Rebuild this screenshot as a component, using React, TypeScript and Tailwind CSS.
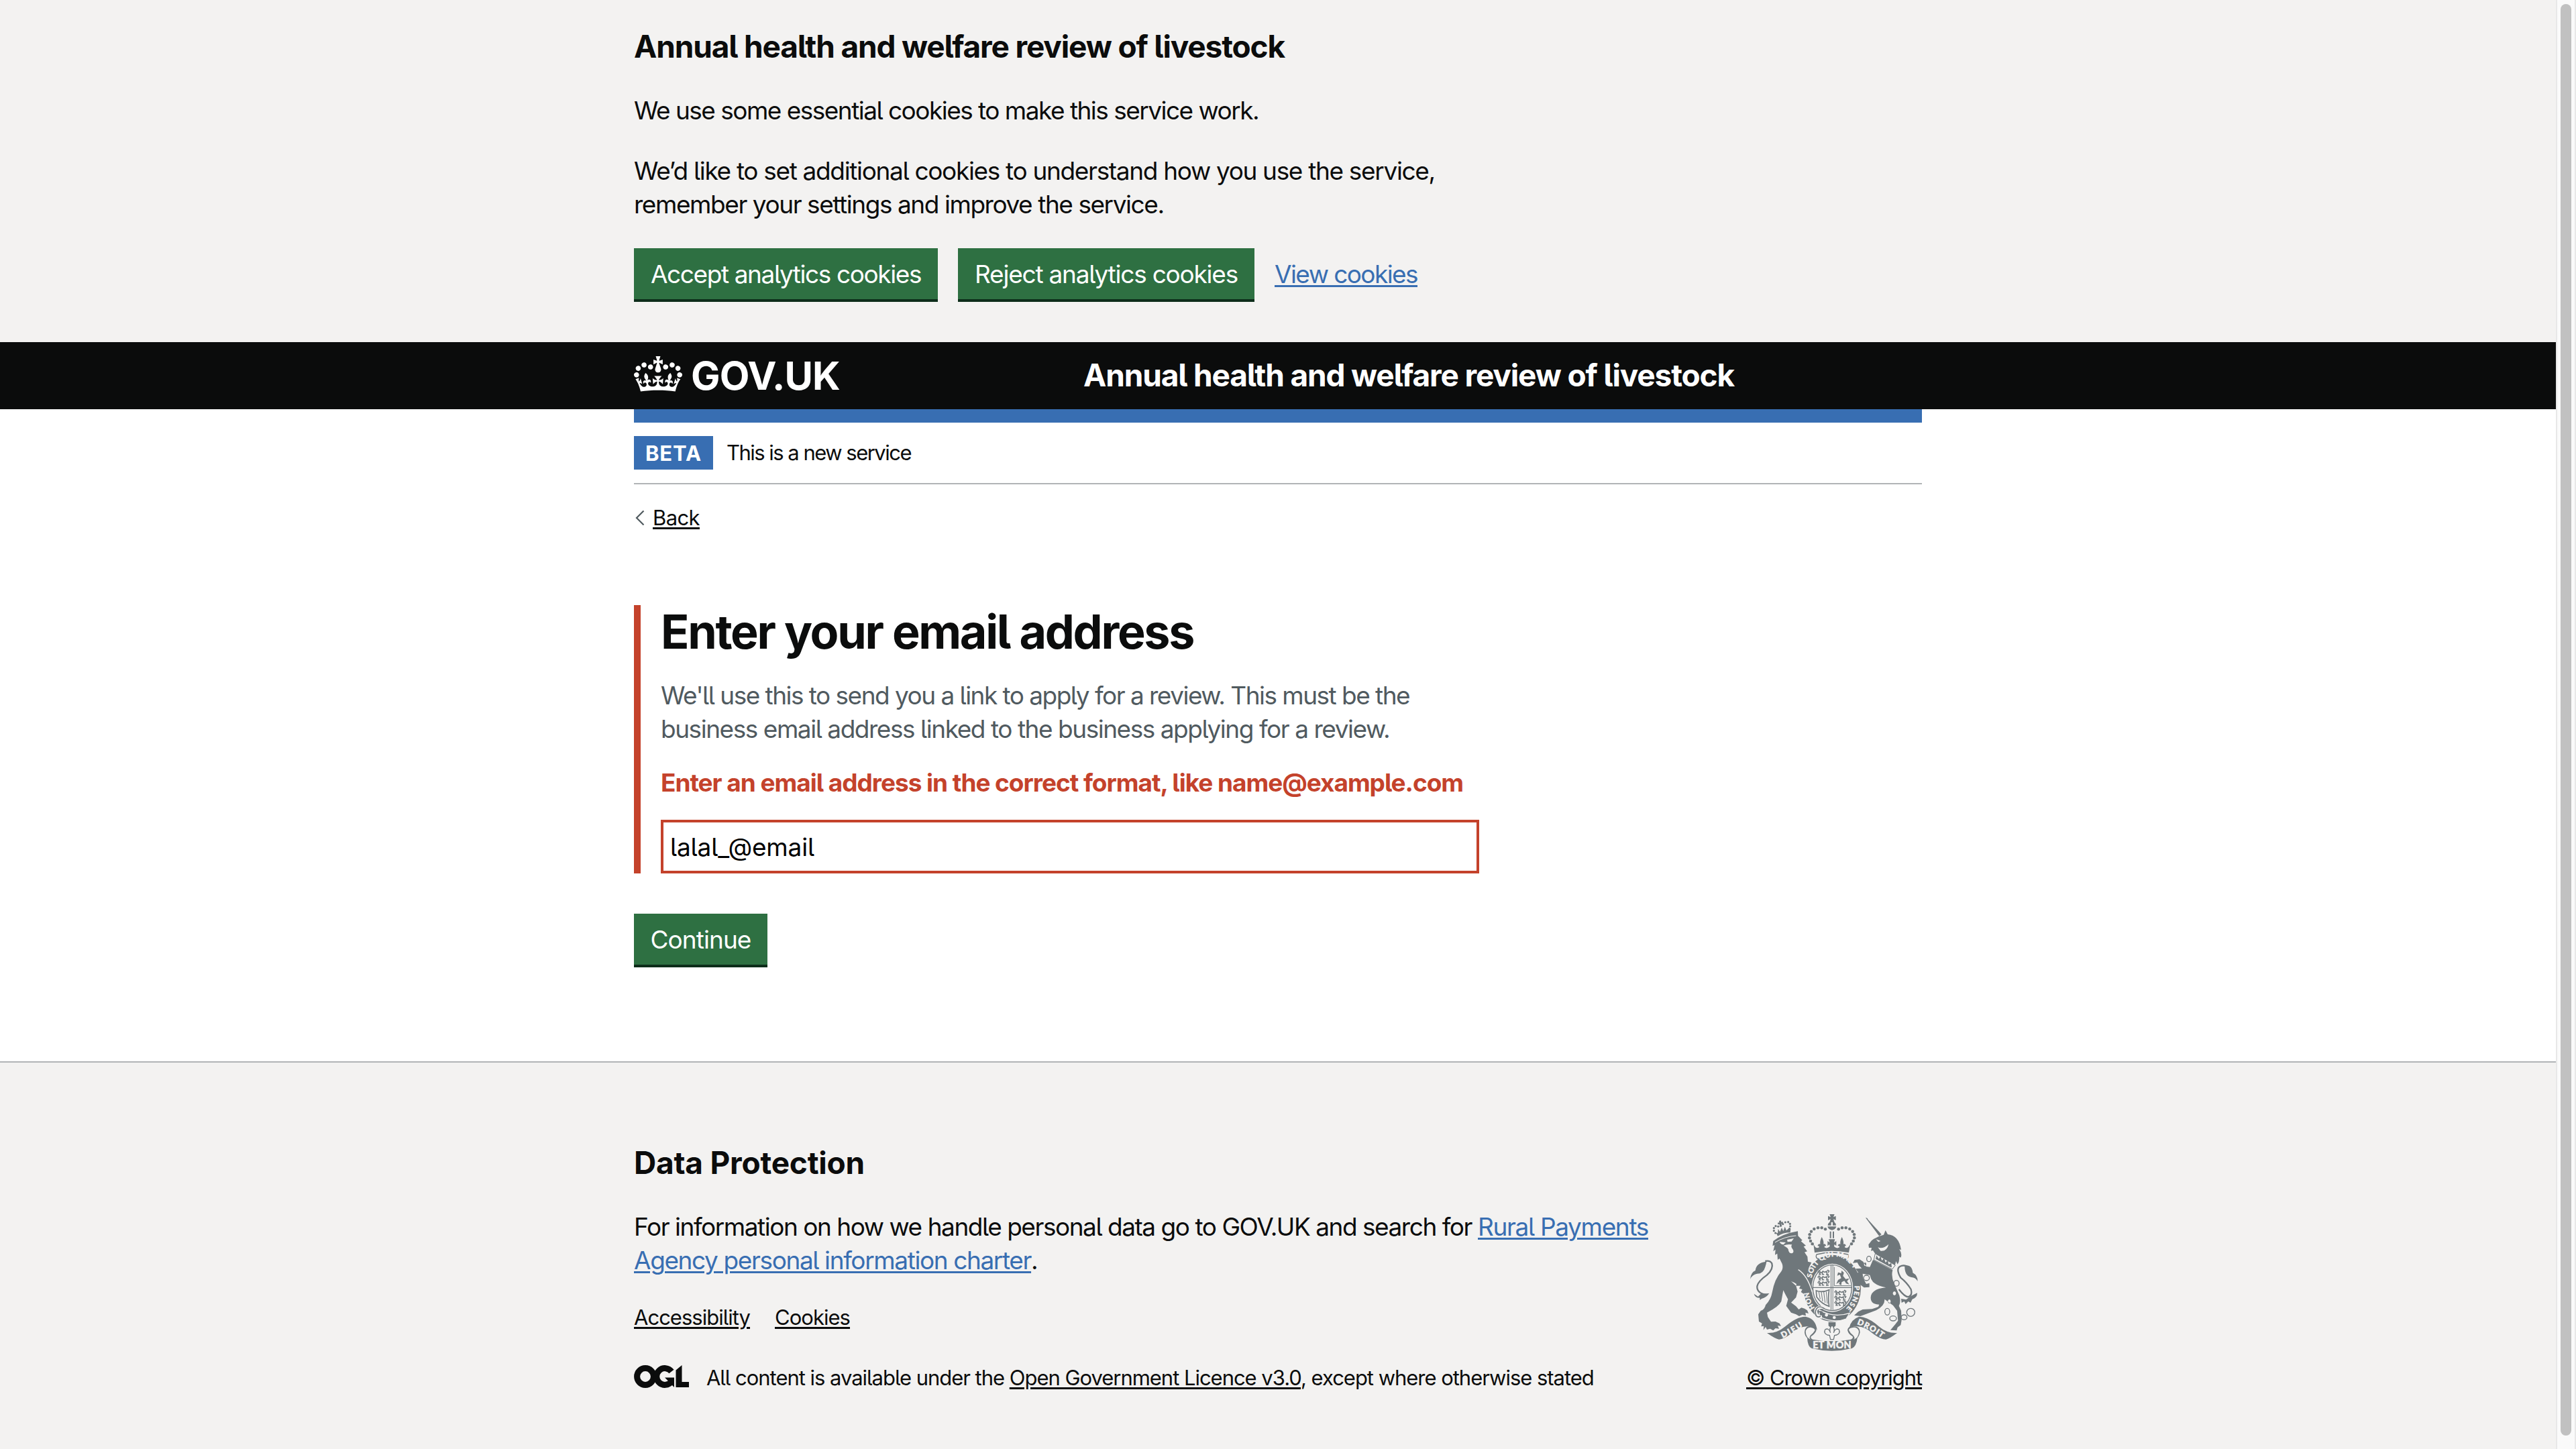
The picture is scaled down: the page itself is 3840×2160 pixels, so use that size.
import type { ReactNode } from "react";

const BODY = "text-[37px] leading-[50px]";
const SMALL = "text-[31px] leading-[40px]";
const UNDERLINE = "underline decoration-[3px] underline-offset-[3px]";

function CrownIcon() {
  return (
    <svg viewBox="0 0 132 97" className="h-[53px] w-[72px]" fill="currentColor" aria-hidden="true">
      <path d="M25 30.2c3.5 1.5 7.7-.2 9.1-3.7 1.5-3.6-.2-7.8-3.9-9.2-3.6-1.4-7.6.3-9.1 3.9-1.4 3.5.3 7.5 3.9 9zM9 39.5c3.6 1.5 7.8-.2 9.2-3.7 1.5-3.6-.2-7.8-3.9-9.1-3.6-1.5-7.6.2-9.1 3.8-1.4 3.5.3 7.5 3.8 9zM4.4 57.2c3.5 1.5 7.7-.2 9.1-3.8 1.5-3.6-.2-7.7-3.9-9.1-3.5-1.5-7.6.3-9.1 3.8-1.4 3.5.3 7.6 3.9 9.1zm38.3-21.4c3.5 1.5 7.7-.2 9.1-3.8 1.5-3.6-.2-7.7-3.9-9.1-3.6-1.5-7.6.3-9.1 3.8-1.3 3.6.4 7.7 3.9 9.1zm64.4-5.6c-3.6 1.5-7.8-.2-9.1-3.7-1.5-3.6.2-7.8 3.8-9.2 3.6-1.4 7.7.3 9.2 3.9 1.3 3.5-.4 7.5-3.9 9zm15.9 9.3c-3.6 1.5-7.7-.2-9.1-3.7-1.5-3.6.2-7.8 3.7-9.1 3.6-1.5 7.7.2 9.2 3.8 1.5 3.5-.3 7.5-3.8 9zm4.7 17.7c-3.6 1.5-7.8-.2-9.2-3.8-1.5-3.6.2-7.7 3.9-9.1 3.6-1.5 7.7.3 9.2 3.8 1.3 3.5-.4 7.6-3.9 9.1zM89.3 35.8c-3.6 1.5-7.8-.2-9.2-3.8-1.4-3.6.2-7.7 3.9-9.1 3.6-1.5 7.7.3 9.2 3.8 1.4 3.6-.3 7.7-3.9 9.1zM69.7 17.7l8.9 4.7V9.3l-8.9 2.8c-.2-.3-.5-.6-.9-.9L72.4 0H59.6l3.5 11.2c-.3.3-.6.5-.9.9l-8.8-2.8v13.1l8.8-4.7c.3.3.6.7.9.9l-5 15.4v.1c-.2.8-.4 1.6-.4 2.4 0 4.1 3.1 7.5 7 8.1h.2c.3 0 .7.1 1 .1.4 0 .7 0 1-.1h.2c4-.6 7.1-4.1 7.1-8.1 0-.8-.1-1.7-.4-2.4V34l-5.1-15.4c.4-.2.7-.6 1-.9zM66 92.8c16.9 0 32.8 1.1 47.1 3.2 4-16.9 8.9-26.7 14-33.5l-9.6-3.4c1 4.9 1.1 7.2 0 10.2-1.5-1.4-3-4.3-4.2-8.7L108.6 76c2.8-2 5-3.2 7.5-3.3-4.4 9.4-10 11.9-13.6 11.2-4.3-.8-6.3-4.6-5.6-7.9 1-4.7 5.7-5.9 8-.5 4.3-8.7-3-11.4-7.6-8.8 7.1-7.2 7.9-13.5 2.1-21.1-8 6.1-8.1 12.3-4.5 20.8-4.7-5.4-12.1-2.5-9.5 6.2 3.4-5.2 7.9-2 7.2 3.1-.6 4.3-6.4 7.8-13.5 7.2-10.3-.9-10.9-8-11.2-13.8 2.5-.5 7.1 1.8 11 7.3L80.2 60c-4.1 4.4-8 5.3-12.3 5.4 1.4-4.4 8-11.6 8-11.6H55.5s6.4 7.2 7.9 11.6c-4.2-.1-8-1-12.3-5.4l1.4 16.4c3.9-5.5 8.5-7.7 10.9-7.3-.3 5.8-.9 12.8-11.1 13.8-7.2.6-12.9-2.9-13.5-7.2-.7-5 3.8-8.3 7.1-3.1 2.7-8.7-4.6-11.6-9.4-6.2 3.7-8.5 3.6-14.7-4.6-20.8-5.8 7.6-5 13.9 2.2 21.1-4.7-2.6-11.9.1-7.7 8.8 2.3-5.5 7.1-4.2 8.1.5.7 3.3-1.3 7.1-5.7 7.9-3.5.7-9-1.8-13.5-11.2 2.5.1 4.7 1.3 7.5 3.3l-4.7-15.4c-1.2 4.4-2.7 7.2-4.3 8.7-1.1-3-.9-5.3 0-10.2l-9.5 3.4c5 6.9 9.9 16.7 14 33.5 14.8-2.1 30.8-3.2 47.7-3.2z" />
    </svg>
  );
}

const CREST = "#6f777b";
const PAPER = "#f3f2f1";

const CROWN_BEADS: [number, number][] = [
  [393, 127], [377, 121], [360, 121], [343, 126], [330, 137], [323, 151], [322, 166], [327, 180], [335, 193],
  [452, 127], [468, 121], [485, 121], [502, 126], [515, 137], [522, 151], [523, 166], [518, 180], [510, 193],
];

const LION_BEADS: [number, number][] = [
  [170, 144], [163, 134], [163, 122], [171, 113], [182, 115], [203, 104], [214, 96], [227, 95], [235, 103], [236, 114], [233, 125],
];

function MiniLions({ x, y }: { x: number; y: number }) {
  return (
    <g transform={`translate(${x} ${y})`} fill="none" stroke={CREST} strokeWidth="4.5" strokeLinecap="round">
      {[0, 24, 48].map((dy) => (
        <path
          key={dy}
          d={`M2 ${dy + 8}l5-6 5 5M6 ${dy + 12}h12l6-7 8 4 12-5M12 ${dy + 13}l-4 6 6 1M22 ${dy + 10}v9h6M36 ${dy + 7}l7 5-2 8 8-1M46 ${dy}l6 4-3 6`}
        />
      ))}
    </g>
  );
}

function RoyalArms() {
  return (
    <svg viewBox="57 60 750 612" className="h-[204px] w-[250px]" fill={CREST} aria-hidden="true">
      {/* central crown */}
      <path d="M412 60h22l-5 13 11-5v19l-11-5 5 14h-22l5-14-12 5V68l12 5z" />
      <path d="M404 110a18 17 0 0 1 15-16v16zm22-16a18 17 0 0 1 15 16h-15zM403 115h39q-3 15-19 16-17-1-20-16z" />
      <path d="M413 137h6v30h-6zM426 137h6v30h-6z" />
      {CROWN_BEADS.map(([x, y]) => (
        <circle key={`${x}-${y}`} cx={x} cy={y} r="6.8" />
      ))}
      <path d="M340 194L345 232Q422 216 498 232L505 194L496 207Q488 214 480 208Q478 200 486 202Q482 190 474 194Q476 180 467 162Q458 180 460 194Q452 190 448 202Q458 200 456 208Q444 216 432 204L434 195L442 202V180L432 187L436 172H408L413 187L403 180V202L411 195L413 204Q400 216 389 208Q387 200 397 202Q393 190 385 194Q387 180 377 162Q368 180 370 194Q362 190 358 202Q367 200 365 208Q356 214 348 207Z" />
      <path d="M354 240Q424 222 494 240Q500 252 488 260Q424 238 359 260Q348 252 354 240Z" fill={PAPER} stroke={CREST} strokeWidth="4" />

      {/* garter */}
      <ellipse cx="424" cy="391" rx="128" ry="149" />
      <ellipse cx="424" cy="389" rx="93" ry="108" fill={PAPER} />
      <ellipse cx="424" cy="389" rx="87" ry="102" fill="none" stroke={CREST} strokeWidth="4" />
      <path d="M338 386h172v4H338zM417 288h3v200h-3zM425 288h3v200h-3z" />
      <path d="M433 296v84h74" fill="none" stroke={CREST} strokeWidth="3" />
      <MiniLions x={358} y={310} />
      <MiniLions x={433} y={400} />
      <path d="M442 372L450 354L464 346L458 330L446 335L450 320L464 324L466 312L476 322L472 336L484 350L500 347L490 360L500 374L486 370L478 358L466 364L464 378L454 372L458 362Z" />
      <path d="M352 402Q378 412 410 398Q404 436 410 472Q376 462 354 430Z" fill="none" stroke={CREST} strokeWidth="5" />
      <path d="M364 408l6 32M375 408l6 42M386 408l6 48M397 406l5 54" stroke={CREST} strokeWidth="3" />
      <path id="garter-top" d="M331 350A101 116 0 0 1 534 384" fill="none" />
      <path id="garter-left" d="M362 497A112 131 0 0 1 319 380" fill="none" />
      <path id="garter-right" d="M524 380A103 121 0 0 1 474 492" fill="none" />
      <g fill={PAPER} stroke={PAPER} strokeWidth="1" fontFamily="Lato, sans-serif" fontWeight="900">
        <text fontSize="32">
          <textPath href="#garter-top" startOffset="4" textLength="262">SOIT QUI MAL Y</textPath>
        </text>
        <text fontSize="31">
          <textPath href="#garter-left" startOffset="24" textLength="76">HON</textPath>
        </text>
        <text fontSize="31">
          <textPath href="#garter-right" textLength="112">PENSE</textPath>
        </text>
      </g>
      <path d="M366 488Q430 526 502 502L486 528Q430 550 366 518Z" stroke={PAPER} strokeWidth="4" />
      <circle cx="398" cy="511" r="7" fill={PAPER} />
      <circle cx="433" cy="522" r="7" fill={PAPER} />
      <path d="M384 476Q348 474 350 496Q352 520 378 520" fill="none" stroke={PAPER} strokeWidth="14" />
      <path d="M388 482Q366 466 354 482Q344 498 352 514Q360 524 372 516M362 496H380" fill="none" stroke={CREST} strokeWidth="5" />

      {/* lion */}
      {LION_BEADS.map(([x, y]) => (
        <circle key={`${x}-${y}`} cx={x} cy={y} r="4.8" />
      ))}
      <path d="M186 90l8-2 2 7 8-1-1 8-7 1 3 12-9 2-2-12-7 1-1-8 7-1z" />
      <path d="M173 143L180 145L182 126L190 139L198 120L205 136L212 116L219 133L230 122L232 128L238 126L236 142Q206 142 180 158Z" />
      <path
        fillRule="evenodd"
        d="M160 180Q200 148 270 136L271 157L290 176L284 181L306 200L296 205L312 226L300 230L313 250L315 272L331 276L319 300L310 335L326 362L336 392L331 414L318 402L312 414L302 404L296 416L284 408L290 396L276 392L282 380L262 380L264 372L254 366L240 360L262 380L269 406L262 432L240 455L262 472L274 486L286 478L300 482L312 490L318 504L304 500L306 514L290 510L276 516L262 508L240 500L218 470L226 440L215 420L205 400L196 450Q184 474 132 500L136 520L150 541L170 540L188 548L195 560L180 558L186 572L170 570L160 580L146 572L132 576L126 564L116 578L118 560L106 562L110 548L96 540L93 508L104 492Q122 486 126 466Q150 440 155 410Q166 350 196 316Q206 300 200 282L188 258L180 264L178 236L168 242L170 218L160 226L166 198L157 202ZM188 184L216 186L206 196Q194 196 188 184ZM222 174L252 168L242 182L224 184ZM206 200Q224 192 244 196Q238 204 244 212Q256 226 246 234Q232 238 228 222Q230 212 206 200Z"
      />
      <path d="M168 186Q210 160 262 156" fill="none" stroke={PAPER} strokeWidth="3" />
      <path d="M272 308Q314 336 334 408" fill="none" stroke={PAPER} strokeWidth="4" />
      <path d="M126 420Q86 412 88 382Q92 360 132 332Q162 304 154 280Q146 266 124 270" fill="none" stroke={CREST} strokeWidth="7" />
      <path d="M57 350Q60 320 80 312Q84 276 130 272Q128 284 124 296Q116 326 88 326Q66 330 57 350ZM74 416L92 428L104 416L142 414Q130 432 108 438L100 444L100 434Q78 434 74 416Z" />

      {/* unicorn */}
      <path d="M573 76Q581 74 584 84L644 150L634 158Z" />
      <path
        fillRule="evenodd"
        d="M662 132L672 150Q722 154 732 220L724 216Q738 240 730 254L723 250Q726 270 716 284L709 270L704 290L622 240L614 234L606 222L597 224L600 210L588 210L586 196L600 178Q626 158 654 152ZM620 172L640 180L630 184ZM628 208Q650 218 676 194Q668 228 640 224Z"
      />
      <path d="M616 236L706 288L692 306L610 264Z" fill={PAPER} stroke={CREST} strokeWidth="3" />
      <path d="M618 260L622 244L632 260L640 248L646 268L656 256L662 276L672 266L676 284L688 278L690 298L684 296Z" />
      <path
        fillRule="evenodd"
        d="M606 264L694 310Q686 340 702 372L724 424Q732 450 722 470L732 492L734 534L730 556L716 566L712 580L684 578L706 552L718 536L714 492L696 468L658 440Q660 470 620 490L576 506L550 516L522 512L540 496L560 486L602 484L630 474L634 464Q594 462 596 432Q598 394 664 388Q610 378 598 350L592 332L560 326L562 346L576 372L590 368L590 386L566 388L550 376L534 350L528 330L540 320L528 304L556 302L544 290L536 276L516 278L524 264L546 262L562 272L576 294L592 296ZM571 276A5 8 0 1 0 571.100 276ZM702 405A7 9 0 1 0 702.100 405ZM679 441A6 9 0 1 0 679.100 441Z"
      />
      <g fill="none" stroke={CREST} strokeWidth="4">
        <ellipse cx="588" cy="260" rx="10" ry="12" />
        <ellipse cx="577" cy="345" rx="13" ry="12" />
        <ellipse cx="711" cy="369" rx="12" ry="13" />
        <ellipse cx="670" cy="496" rx="11" ry="15" />
        <ellipse cx="696" cy="526" rx="15" ry="11" />
        <ellipse cx="745" cy="521" rx="13" ry="11" />
        <circle cx="775" cy="499" r="18" />
      </g>
      <path d="M722 396Q748 430 764 430Q784 422 776 396Q758 366 730 344Q708 306 726 294Q740 286 756 292" fill="none" stroke={CREST} strokeWidth="7" />
      <path d="M748 288Q782 286 784 322Q806 334 806 360Q796 342 778 342Q746 336 748 288ZM804 412Q804 434 782 440L774 456L764 450L752 462L746 450L734 456L732 438L754 442L776 426Z" />

      {/* ribbons */}
      <path d="M132 591Q176 594 214 562Q264 518 304 518Q350 526 356 578Q340 562 318 562Q280 558 240 594Q206 620 186 620Q170 618 132 591Z" />
      <path d="M714 591Q670 594 632 562Q584 518 544 518Q508 530 500 568Q516 558 528 562Q566 558 606 594Q640 620 664 620Q678 618 714 591Z" />
      <path d="M300 588Q300 562 324 560Q356 564 352 582Q346 596 330 606Q324 614 336 620Q422 636 508 620Q520 614 514 606Q496 596 492 578Q496 558 522 562Q548 562 548 588Q544 606 536 614Q532 650 512 660Q422 682 332 660Q314 652 312 614Q302 606 300 588Z" />
      <path d="M305 586Q308 566 326 566Q348 570 346 580Q340 592 326 602Q318 614 328 621Q306 612 305 586ZM543 586Q540 566 522 566Q498 568 498 578Q504 592 518 602Q528 614 520 621Q542 612 543 586Z" fill={PAPER} />
      <path id="ribbon-left" d="M203 614Q248 592 306 554" fill="none" />
      <path id="ribbon-right" d="M534 552Q582 568 646 614" fill="none" />
      <g fill={PAPER} stroke={PAPER} strokeWidth="1.500" fontFamily="Lato, sans-serif" fontWeight="900">
        <text fontSize="36">
          <textPath href="#ribbon-left" textLength="104">DIEU</textPath>
        </text>
        <text fontSize="36">
          <textPath href="#ribbon-right" textLength="128">DROIT</textPath>
        </text>
        <text x="337" y="661" fontSize="43" textLength="172">ET MON</text>
      </g>
      <path d="M407 543h32v16q-8 6-16 16-8-10-16-16z" />
      <path d="M423 556Q438 572 430 590Q438 566 454 576Q462 592 444 600L434 602L430 620H416L412 602L402 600Q384 592 392 576Q408 566 416 590Q408 572 423 556Z" fill={PAPER} stroke={CREST} strokeWidth="4" />
    </svg>
  );
}

function OglIcon() {
  return (
    <svg viewBox="0 0 82 34" className="h-[34px] w-[82px]" aria-hidden="true">
      <g fill="none" stroke="#0b0c0c" strokeWidth="9">
        <circle cx="17" cy="17" r="12.4" />
        <path d="M56 9.5A12.4 12.4 0 1 0 56 24.5" />
      </g>
      <path d="M46 18.500h14V33l-4-4-7-2.500 2-3zM62.500 7.500L71.500 0V25H82v8H62.500z" fill="#0b0c0c" />
    </svg>
  );
}

function Button({ children, className = "" }: { children: ReactNode; className?: string }) {
  return (
    <button
      className={`h-20 border-b-4 border-[#0d2d1a] bg-[#2e7042] pt-px text-center whitespace-nowrap text-white ${BODY} ${className}`}
    >
      {children}
    </button>
  );
}

function Link({ children, className = "" }: { children: ReactNode; className?: string }) {
  return (
    <a href="#" className={`${UNDERLINE} ${className}`}>
      {children}
    </a>
  );
}

function Container({ children, className = "" }: { children: ReactNode; className?: string }) {
  return <div className={`mx-auto w-[1920px] whitespace-nowrap ${className}`}>{children}</div>;
}

function CookieBanner() {
  return (
    <section className="h-[510px] bg-[#f3f2f1] pt-[39px]">
      <Container>
        <h2 className="text-[46px] leading-[60px] font-bold tracking-[-0.025em]">
          Annual health and welfare review of livestock
        </h2>
        <div className={`mt-[41px] ${BODY}`}>
          <p className="tracking-[-0.0412em]">We use some essential cookies to make this service work.</p>
          <p className="mt-10 tracking-[-0.036em]">
            We’d like to set additional cookies to understand how you use the service,
          </p>
          <p className="tracking-[-0.039em]">remember your settings and improve the service.</p>
        </div>
        <div className="mt-10 flex items-start">
          <Button className="w-[453px] tracking-[-0.038em]">Accept analytics cookies</Button>
          <Button className="ml-[30px] w-[442px] tracking-[-0.033em]">Reject analytics cookies</Button>
          <Link className={`mt-[14px] ml-[30px] tracking-[-0.0427em] text-[#386eb2] ${BODY}`}>View cookies</Link>
        </div>
      </Container>
    </section>
  );
}

function Header() {
  return (
    <header className="h-[100px] bg-[#0b0c0c] text-white">
      <Container className="flex h-full items-center">
        <div className="flex w-[670px] items-center">
          <span className="-mt-[5px]">
            <CrownIcon />
          </span>
          <span className="ml-[13px] text-[58px] leading-[60px] font-bold tracking-[-0.0149em]">GOV.UK</span>
        </div>
        <span className="-mt-[2px] text-[46px] leading-[60px] font-bold tracking-[-0.025em]">
          Annual health and welfare review of livestock
        </span>
      </Container>
    </header>
  );
}

function EmailForm() {
  return (
    <main>
      <div className="border-l-[10px] border-[#c4422b] pl-[30px]">
        <h1 className="text-[70px] leading-[80px] font-bold tracking-[-0.033em]">Enter your email address</h1>
        <div className={`mt-[30px] text-[#505a5f] ${BODY}`}>
          <p className="tracking-[-0.0413em]">
            We'll use this to send you a link to apply for a review. This must be the
          </p>
          <p className="tracking-[-0.0395em]">
            business email address linked to the business applying for a review.
          </p>
        </div>
        <p className={`mt-[30px] font-bold tracking-[-0.028em] text-[#c4422b] ${BODY}`}>
          Enter an email address in the correct format, like name@example.com
        </p>
        <input
          type="email"
          defaultValue="lalal_@email"
          className="mt-[30px] block h-20 w-[1220px] border-4 border-[#c4422b] bg-white px-[10px] text-[37px] tracking-[-0.005em] text-black"
        />
      </div>
      <Button className="mt-[60px] w-[199px] tracking-[-0.0252em]">Continue</Button>
    </main>
  );
}

function Footer() {
  return (
    <footer className="h-[578px] border-t-2 border-[#b1b4b6] bg-[#f3f2f1] pt-[119px]">
      <Container className="flex items-end justify-between">
        <div>
          <h2 className="text-[46px] leading-[60px] font-bold tracking-[-0.0047em]">Data Protection</h2>
          <div className={`mt-[41px] ${BODY}`}>
            <p>
              <span className="tracking-[-0.0397em]">
                For information on how we handle personal data go to GOV.UK and search for{" "}
              </span>
              <Link className="tracking-[-0.0363em] text-[#386eb2]">Rural Payments</Link>
            </p>
            <p>
              <Link className="tracking-[-0.0376em] text-[#386eb2]">Agency personal information charter</Link>.
            </p>
          </div>
          <nav className={`mt-10 flex gap-[37px] ${SMALL}`}>
            <Link className="tracking-[-0.0318em]">Accessibility</Link>
            <Link className="tracking-[-0.0313em]">Cookies</Link>
          </nav>
          <div className={`mt-[50px] flex items-center ${SMALL}`}>
            <span className="-mt-[5px] mr-[26px]">
              <OglIcon />
            </span>
            <p className="tracking-[-0.0332em]">
              All content is available under the <Link>Open Government Licence v3.0</Link>, except where otherwise
              stated
            </p>
          </div>
        </div>
        <div className="flex flex-col items-end gap-5">
          <span className="mr-[6px]">
            <RoyalArms />
          </span>
          <Link className={`tracking-[-0.0352em] ${SMALL}`}>© Crown copyright</Link>
        </div>
      </Container>
    </footer>
  );
}

export default function App() {
  return (
    <div className="flex h-[2160px] w-[3840px] overflow-hidden bg-white font-['Inter','Liberation_Sans',sans-serif] text-[#0b0c0c] [font-feature-settings:'cv05']">
      <div className="flex w-[3810px] flex-col">
        <CookieBanner />
        <Header />
        <Container>
          <div className="h-5 bg-[#386eb2]" />
          <div className="flex h-[92px] items-center border-b-2 border-[#b1b4b6]">
            <strong className="h-[50px] w-[118px] bg-[#386eb2] text-center text-[31px] leading-[51px] tracking-[0.03em] text-white">
              BETA
            </strong>
            <span className={`ml-5 tracking-[-0.049em] ${SMALL}`}>This is a new service</span>
          </div>
          <div className={`mt-[30px] flex h-10 items-center ${SMALL}`}>
            <svg viewBox="0 0 16 24" className="mr-3 h-6 w-4" fill="none" stroke="#505a5f" strokeWidth="2.2">
              <path d="M14.500 1.500L4 12l10.500 10.500" />
            </svg>
            <Link className="tracking-[-0.0195em]">Back</Link>
          </div>
          <div className="mt-[110px]">
            <EmailForm />
          </div>
        </Container>
        <div className="mt-auto">
          <Footer />
        </div>
      </div>
      <div className="flex w-[30px] justify-center border-x-2 border-[#e8e8e8] bg-[#fafafa] pt-[6px]">
        <div className="h-[2134px] w-4 rounded-full bg-[#c1c1c1]" />
      </div>
    </div>
  );
}
